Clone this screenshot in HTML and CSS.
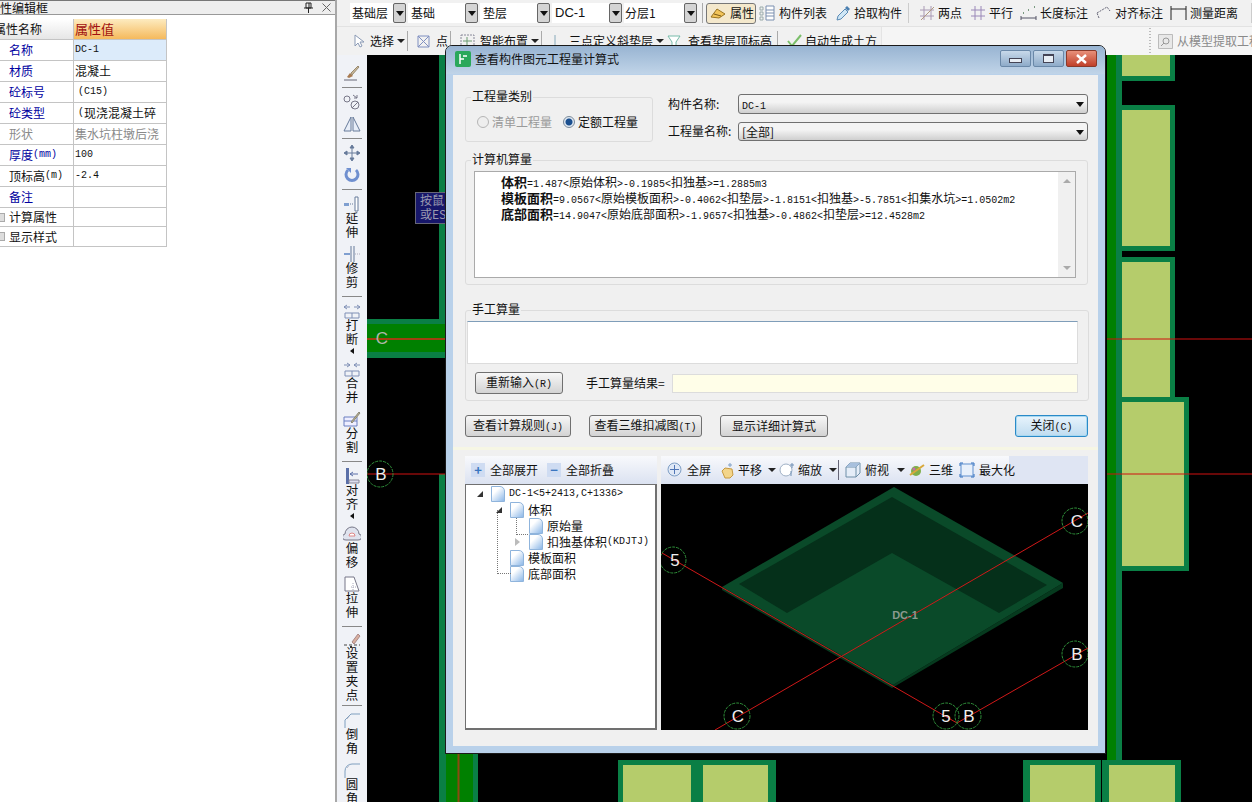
FILE: index.html
```html
<!DOCTYPE html>
<html lang="zh">
<head>
<meta charset="utf-8">
<title>查看构件图元工程量计算式</title>
<link rel="stylesheet" href="styles.css">
</head>
<body>
<div class="app">
  <aside class="props">
    <div class="props-title"><span class="props-name">属性编辑框</span>
      <svg class="pin" width="9" height="11" viewBox="0 0 9 11"><path d="M2 1h5v5H2zM0 6h9M4.5 6v5M5 1v5" fill="none" stroke="#222"/></svg>
      <svg class="x" width="9" height="9" viewBox="0 0 9 9"><path d="M.5.5l8 8M8.5.5l-8 8" stroke="#666"/></svg>
    </div>
    <div class="ptable">
      <div class="pc ph1"><span class="shift">属性名称</span></div><div class="pc ph2">属性值</div>
      <div class="pc blue">名称</div><div class="pc sel"><span class="m">DC-1</span></div>
      <div class="pc blue">材质</div><div class="pc">混凝土</div>
      <div class="pc blue">砼标号</div><div class="pc"><span class="m ind">(C15)</span></div>
      <div class="pc blue">砼类型</div><div class="pc clip"><span class="m ind">(</span>现浇混凝土碎</div>
      <div class="pc grey">形状</div><div class="pc grey clip">集水坑柱墩后浇</div>
      <div class="pc blue">厚度<span class="m">(mm)</span></div><div class="pc"><span class="m">100</span></div>
      <div class="pc">顶标高<span class="m">(m)</span></div><div class="pc"><span class="m">-2.4</span></div>
      <div class="pc blue">备注</div><div class="pc"></div>
      <div class="pc"><i class="plus"></i>计算属性</div><div class="pc"></div>
      <div class="pc"><i class="plus"></i>显示样式</div><div class="pc"></div>
    </div>
  </aside>

  <div class="right">
    <div class="bar1">
      <div class="combo w43">基础层</div><div class="drop"></div>
      <div class="combo w57">基础</div><div class="drop"></div>
      <div class="combo w57">垫层</div><div class="drop"></div>
      <div class="combo w57 sans">DC-1</div><div class="drop"></div>
      <div class="combo w60">分层1</div><div class="drop"></div>
      <i class="vsep s1"></i>
      <div class="tb active">
        <svg width="16" height="14" viewBox="0 0 16 14"><path d="M1 11l6-8 8 5-6 4z" fill="#f2c45a" stroke="#9a7420"/><path d="M4 8l7 2" stroke="#7a5a18"/></svg>属性</div>
      <div class="tb t1"><svg width="16" height="16" viewBox="0 0 16 16"><path d="M1 2h3v3H1zM1 7h3v3H1zM1 12h3v3H1z" fill="none" stroke="#9aa"/><path d="M7 1h8v14H7zM7 5h8M7 8h8M7 11h8" fill="#fff" stroke="#7a8fb0"/></svg>构件列表</div>
      <div class="tb t2"><svg width="16" height="16" viewBox="0 0 16 16"><path d="M2 15l1-4 7-7 3 3-7 7z" fill="#cfe6f5" stroke="#5a8ab5"/><path d="M10 3l2-2 3 3-2 2z" fill="#4a7fb0"/></svg>拾取构件</div>
      <i class="vsep s2"></i>
      <div class="tb t3"><svg width="16" height="16" viewBox="0 0 16 16"><path d="M5 1v14M12 1v14M1 5h14M1 11h14" stroke="#a99ab5" fill="none"/><path d="M2 15L15 2" stroke="#b09a80"/></svg>两点</div>
      <div class="tb t3"><svg width="16" height="16" viewBox="0 0 16 16"><path d="M5 1v14M11 1v14M1 5h14M1 11h14" stroke="#9a88b8" fill="none"/></svg>平行</div>
      <div class="tb t4"><svg width="17" height="16" viewBox="0 0 17 16"><path d="M1 11v4M16 11v4M1 13h15" stroke="#556" fill="none"/><path d="M3 8h1M14 2h1M8 5h1" stroke="#7a9a80" stroke-width="2"/></svg>长度标注</div>
      <div class="tb t4"><svg width="17" height="16" viewBox="0 0 17 16"><path d="M2 8l10-6 3 4M4 13L2 8" stroke="#667" stroke-dasharray="2 1" fill="none"/></svg>对齐标注</div>
      <div class="tb t4"><svg width="17" height="16" viewBox="0 0 17 16"><path d="M1 1v14M16 1v14M1 4h15" stroke="#222" fill="none"/></svg>测量距离</div>
      <i class="vsep s3"></i>
    </div>
    <div class="bar2">
      <div class="tb b1"><svg width="11" height="14" viewBox="0 0 11 14"><path d="M1 1v11l3-3 2 4 2-1-2-4h4z" fill="#fff" stroke="#8a9ab5"/></svg>选择<i class="caret"></i></div>
      <i class="vsep"></i>
      <div class="tb b2"><svg width="13" height="13" viewBox="0 0 13 13"><path d="M1 1h11v11H1zM1 1l11 11M12 1L1 12" fill="none" stroke="#7f8fc0"/></svg>点</div>
      <i class="vsep"></i>
      <div class="tb b3"><svg width="15" height="15" viewBox="0 0 15 15"><path d="M1 1h13v13H1z" fill="none" stroke="#889" stroke-dasharray="2 1"/><path d="M7 3v9M3 7h9" stroke="#6a9a70"/></svg>智能布置<i class="caret"></i></div>
      <i class="vsep"></i>
      <div class="tb b4"><svg width="13" height="15" viewBox="0 0 13 15"><path d="M2 1v13h10" fill="none" stroke="#8ab"/></svg>三点定义斜垫层<i class="caret"></i></div>
      <div class="tb b5"><svg width="14" height="14" viewBox="0 0 14 14"><path d="M1 2h12L9 8v5H5V8z" fill="#fff" stroke="#7ba"/></svg>查看垫层顶标高</div>
      <i class="vsep"></i>
      <div class="tb b6"><svg width="15" height="14" viewBox="0 0 15 14"><path d="M1 7l4 5 9-11" fill="none" stroke="#7bbf6a" stroke-width="2"/></svg>自动生成土方</div>
      <div class="bar2-rest">
        <i class="dots"></i>
        <div class="tb b7"><svg width="15" height="15" viewBox="0 0 15 15"><path d="M.5.5h14v14H.5z" fill="#e8e8e8" stroke="#bbb"/><circle cx="8" cy="7" r="3" fill="none" stroke="#999"/><path d="M6 9l-3 3" stroke="#999"/></svg><span class="dim">从模型提取工程量</span></div>
      </div>
    </div>

    <div class="work">
      <nav class="side">
        <div class="si"><svg width="18" height="18" viewBox="0 0 18 18"><path d="M1 16h13" stroke="#667"/><path d="M4 13l3-4 3 3-4 2z" fill="#a87a50"/><path d="M8 9l7-7 1 1-7 8z" fill="#c8b89a" stroke="#9a8a70"/></svg></div>
        <i class="hsep"></i>
        <div class="si"><svg width="18" height="18" viewBox="0 0 18 18" fill="none" stroke="#778"><circle cx="4" cy="6" r="3"/><circle cx="12" cy="12" r="4"/><path d="M10 2l4 3M14 2v3h-3M9 15l6-6"/></svg></div>
        <div class="si"><svg width="18" height="18" viewBox="0 0 18 18"><path d="M8 2L1 16h7zM10 2l7 14h-7z" fill="#e8eef8" stroke="#667a9a"/></svg></div>
        <i class="hsep"></i>
        <div class="si"><svg width="18" height="18" viewBox="0 0 18 18"><path d="M9 2v14M2 9h14M9 1l-2 3h4zM9 17l-2-3h4zM1 9l3-2v4zM17 9l-3-2v4z" stroke="#667a9a" fill="#667a9a"/></svg></div>
        <div class="si"><svg width="18" height="18" viewBox="0 0 18 18"><path d="M5 4a6 6 0 1 0 8 0" fill="none" stroke="#6f8fcf" stroke-width="3"/><path d="M3 2h5v5z" fill="#6f8fcf"/></svg></div>
        <i class="hsep"></i>
        <div class="tool"><svg width="18" height="18" viewBox="0 0 18 18"><path d="M12 2h3v14h-3z" fill="#fff" stroke="#667a9a"/><path d="M1 8h5v3H1z" fill="#7f9fd0"/><path d="M7 9h4" stroke="#667a9a" stroke-dasharray="1 1"/></svg><span class="vt">延伸</span></div>
        <div class="tool"><svg width="18" height="18" viewBox="0 0 18 18"><path d="M8 1v16M11 1v16" stroke="#667a9a" fill="none"/><path d="M1 9h6" stroke="#7f9fd0" stroke-width="2"/><path d="M12 9h5" stroke="#aab" stroke-dasharray="1 1"/></svg><span class="vt">修剪</span></div>
        <i class="hsep"></i>
        <div class="tool"><svg width="18" height="18" viewBox="0 0 18 18" fill="none" stroke="#7f8fb5"><path d="M2 11h14M2 16h14M2 11v5M16 11v5M9 11v5"/><path d="M7 5H1l3-2M1 5l3 2M11 5h6l-3-2M17 5l-3 2"/></svg><span class="vt">打断</span><i class="larrow"></i></div>
        <div class="tool"><svg width="18" height="18" viewBox="0 0 18 18" fill="none" stroke="#7f8fb5"><path d="M2 11h14M2 16h14M2 11v5M16 11v5M9 11v5"/><path d="M1 5h6l-3-2M7 5l-3 2M17 5h-6l3-2M11 5l3 2"/></svg><span class="vt">合并</span></div>
        <div class="tool"><svg width="18" height="18" viewBox="0 0 18 18"><path d="M1 7h13v9H1z" fill="#eef" stroke="#6a7fc0"/><path d="M1 11h13" stroke="#6a7fc0"/><path d="M8 12L16 2l1 1-8 10z" fill="#c0b090" stroke="#887"/></svg><span class="vt">分割</span></div>
        <i class="hsep"></i>
        <div class="tool"><svg width="18" height="18" viewBox="0 0 18 18"><path d="M3 1v16h3V1z" fill="#5a6fa8"/><path d="M6 13h10v3H6z" fill="#dde" stroke="#889"/><path d="M15 7H7l3-2M7 7l3 2" fill="none" stroke="#5a6fa8"/></svg><span class="vt">对齐</span><i class="larrow"></i></div>
        <div class="tool"><svg width="18" height="18" viewBox="0 0 18 18"><path d="M3 15a3 3 0 0 1-1-6 7 7 0 0 1 14 0 3 3 0 0 1-1 6z" fill="#dfe3ee" stroke="#778"/><path d="M6 11a3 3 0 0 1 6 0z" fill="#fff" stroke="#d88"/></svg><span class="vt">偏移</span></div>
        <div class="tool"><svg width="18" height="18" viewBox="0 0 18 18"><path d="M2 2h9l5 14H2z" fill="#fff" stroke="#778"/><path d="M10 8v8M13 12h-6" stroke="#aab" stroke-dasharray="1 1"/></svg><span class="vt">拉伸</span></div>
        <i class="hsep"></i>
        <div class="tool long"><svg width="18" height="18" viewBox="0 0 18 18"><path d="M1 13h16" stroke="#444" stroke-dasharray="3 2"/><path d="M7 14h2v2H7z" fill="#333"/><path d="M9 10l6-8 2 2-6 8z" fill="#d8b0a0" stroke="#a88"/></svg><span class="vt">设置夹点</span></div>
        <i class="hsep"></i>
        <div class="tool"><svg width="18" height="18" viewBox="0 0 18 18"><path d="M2 17V9l6-6h9" fill="none" stroke="#7f9fbf"/><path d="M4 8l3-3" stroke="#aab" stroke-dasharray="1 1"/></svg><span class="vt">倒角</span></div>
        <div class="tool"><svg width="18" height="18" viewBox="0 0 18 18"><path d="M2 17V10a7 7 0 0 1 7-7h8" fill="none" stroke="#7f9fbf"/><path d="M4 7l3-3" stroke="#aab" stroke-dasharray="1 1"/></svg><span class="vt">圆角</span></div>
      </nav>

      <div class="canvas">
        <svg class="cad" width="885" height="747" viewBox="367 55 885 747">
          <rect x="367" y="55" width="885" height="747" fill="#000"/>
          <rect x="439" y="55" width="6" height="265" fill="#0a7f45"/>
          <rect x="367" y="319" width="78" height="39" fill="#0a7f45"/>
          <rect x="367" y="324" width="78" height="28" fill="#008000"/>
          <rect x="439" y="474" width="6" height="328" fill="#0a7f45"/>
          <rect x="441" y="754" width="37" height="48" fill="#0a7f45"/>
          <rect x="446" y="754" width="27" height="48" fill="#008000"/>
          <path d="M458.500 754V802" stroke="#8a4a10" stroke-width="2"/>
          <rect x="1107" y="55" width="9" height="747" fill="#008000"/>
          <rect x="1116" y="55" width="6" height="747" fill="#0a7f45"/>
          <path class="pad" d="M1122 55h53v26h-53zM1122 105h53v146h-53zM1122 257h53v140h14v174h-67zM618 760h78v42h-78zM696 760h80v42h-80zM1023 760h78v42h-78zM1102 760h79v42h-79z"/>
          <path class="fill" d="M1122 55h48v21h-48zM1122 110h48v136h-48zM1122 262h48v135h-48zM1122 402h62v164h-62zM623 765h68v37h-68zM703 765h65v37h-65zM1030 765h65v37h-65zM1109 765h66v37h-66z"/>
          <path d="M1107 339H1252M367 474H445M1107 474H1252" stroke="#d01010"/>
          <path d="M367 339H445" stroke="#a04010" stroke-width="2"/>
          <circle cx="380" cy="474" r="13" class="ring"/>
          <text x="382" y="344" class="cadl dimm" text-anchor="middle">C</text>
          <text x="381" y="480" class="cadl" text-anchor="middle">B</text>
          <rect x="415.500" y="192.500" width="30" height="31" fill="#17176a" stroke="#667"/>
          <text x="420" y="205" class="tip">按鼠</text>
          <text x="420" y="219" class="tip">或ES</text>
        </svg>
      </div>
    </div>
  </div>

  <section class="dialog">
    <header class="dtitle">
      <svg width="16" height="16" viewBox="0 0 16 16"><rect width="16" height="16" rx="2" fill="#2aa85a"/><path d="M5 3v10M5 8h4M8 5h4" stroke="#fff" stroke-width="1.500" fill="none"/></svg>
      <span class="dname">查看构件图元工程量计算式</span>
      <div class="wbtn"><i class="g-min"></i></div>
      <div class="wbtn"><i class="g-max"></i></div>
      <div class="wbtn close"><svg width="13" height="10" viewBox="0 0 13 10"><path d="M2 1l9 8M11 1l-9 8" stroke="#fff" stroke-width="2.500"/></svg></div>
    </header>
    <div class="client">
      <div class="toprow">
        <fieldset class="grp g1">
          <span class="legend">工程量类别</span>
          <label class="radio off"><i class="rdo"></i>清单工程量</label>
          <label class="radio"><i class="rdo on"></i>定额工程量</label>
        </fieldset>
        <div class="fields">
          <div class="field"><span class="flabel">构件名称:</span><div class="select"><span class="m">DC-1</span></div></div>
          <div class="field"><span class="flabel">工程量名称:</span><div class="select">[全部]</div></div>
        </div>
      </div>
      <div class="grp g2">
        <span class="legend">计算机算量</span>
        <div class="output">
          <div class="lines">
            <p><b>体积</b><span class="m">=1.487&lt;</span>原始体积<span class="m">&gt;-0.1985&lt;</span>扣独基<span class="m">&gt;=1.2885m3</span></p>
            <p><b>模板面积</b><span class="m">=9.0567&lt;</span>原始模板面积<span class="m">&gt;-0.4062&lt;</span>扣垫层<span class="m">&gt;-1.8151&lt;</span>扣独基<span class="m">&gt;-5.7851&lt;</span>扣集水坑<span class="m">&gt;=1.0502m2</span></p>
            <p><b>底部面积</b><span class="m">=14.9047&lt;</span>原始底部面积<span class="m">&gt;-1.9657&lt;</span>扣独基<span class="m">&gt;-0.4862&lt;</span>扣垫层<span class="m">&gt;=12.4528m2</span></p>
          </div>
          <div class="vscroll"><i class="up"></i><i class="down"></i></div>
        </div>
      </div>
      <div class="grp g3">
        <span class="legend">手工算量</span>
        <div class="input"></div>
        <div class="manual">
          <button class="btn b-re">重新输入<span class="m">(R)</span></button>
          <span class="mlabel">手工算量结果=</span>
          <div class="result"></div>
        </div>
      </div>
      <div class="actions">
        <button class="btn a1">查看计算规则<span class="m">(J)</span></button>
        <button class="btn a2">查看三维扣减图<span class="m">(T)</span></button>
        <button class="btn a3">显示详细计算式</button>
        <button class="btn a4">关闭<span class="m">(C)</span></button>
      </div>
      <div class="strip"></div>
      <div class="lower">
        <div class="lcol">
          <div class="subbar">
            <div class="sb"><i class="pm">+</i>全部展开</div>
            <div class="sb"><i class="pm">−</i>全部折叠</div>
          </div>
          <div class="tree">
            <div class="tr d0"><i class="tw open"></i><i class="doc"></i><span class="m">DC-1&lt;5+2413,C+1336&gt;</span></div>
            <div class="tr d1"><i class="tw open"></i><i class="doc"></i>体积</div>
            <div class="tr d2"><i class="doc"></i>原始量</div>
            <div class="tr d2"><i class="tw shut"></i><i class="doc"></i>扣独基体积<span class="m">(KDJTJ)</span></div>
            <div class="tr d1"><i class="doc"></i>模板面积</div>
            <div class="tr d1"><i class="doc"></i>底部面积</div>
            <i class="vline v1"></i><i class="vline v2"></i>
          </div>
        </div>
        <div class="rcol">
          <div class="subbar vbar">
            <div class="vb w1"><svg width="16" height="16" viewBox="0 0 16 16"><circle cx="7.500" cy="7.500" r="6.500" fill="#dfe8f6" stroke="#7f9fc5"/><path d="M7.500 3v9M3 7.500h9" stroke="#4f75b5"/></svg>全屏</div>
            <div class="vb w2"><svg width="17" height="17" viewBox="0 0 17 17"><path d="M3 9l3-3 7 1 1 6-3 3H6z" fill="#f3d58a" stroke="#c79a40"/><path d="M11 1v4M9 3h4" stroke="#7f9fc5"/></svg>平移<i class="caret"></i></div>
            <div class="vb w3"><svg width="16" height="16" viewBox="0 0 16 16"><circle cx="7" cy="8" r="6" fill="#fff" stroke="#9fb0c5"/><path d="M13 1v5M11 3h4M12 9v5" stroke="#6f8fb5"/></svg>缩放<i class="caret"></i></div>
            <i class="vsep dark"></i>
            <div class="vb w4"><svg width="16" height="16" viewBox="0 0 16 16"><path d="M1 5h10v10H1zM1 5l4-4h10v10l-4 4M11 5l4-4" fill="#e5edf8" stroke="#6f8fa8"/><path d="M5 1h10l-4 4H1z" fill="#a8c0dd"/></svg>俯视<i class="caret"></i></div>
            <div class="vb w5"><svg width="16" height="16" viewBox="0 0 16 16"><circle cx="7" cy="9" r="5" fill="#7fae4a"/><path d="M1 13L15 3" stroke="#d9a83a" stroke-width="2"/><circle cx="5" cy="7" r="1.500" fill="#c86ab0"/></svg>三维</div>
            <div class="vb w6"><svg width="16" height="16" viewBox="0 0 16 16"><path d="M2 2h12v12H2z" fill="#e8f0fb" stroke="#5f8fcf"/><path d="M1 4V1h3M12 1h3v3M15 12v3h-3M4 15H1v-3" fill="none" stroke="#2f6fbf"/></svg>最大化</div>
          </div>
          <div class="view">
            <svg width="427" height="246" viewBox="661 484 427 246">
              <rect x="661" y="484" width="427" height="246" fill="#000"/>
              <path d="M722 587L893 685 1063 583V588L892 688 722 590z" fill="#063a1e"/>
              <path d="M722 587L894 487 1063 583 893 685z" fill="#0a4a29"/>
              <path d="M739 584L892 497 1047 585 999 613 892 553 787 613z" fill="#05301a"/>
              <path d="M662 553L957 723M715 730L1088 513M957 723L1088 648" stroke="#d01818" fill="none"/>
              <g class="ring">
                <circle cx="673" cy="560" r="13"/>
                <circle cx="1075" cy="521" r="13"/>
                <circle cx="1075" cy="654" r="13"/>
                <circle cx="737" cy="716" r="13"/>
                <circle cx="946" cy="716" r="13"/>
                <circle cx="968" cy="716" r="13"/>
              </g>
              <text x="675" y="566" class="cadl" text-anchor="middle">5</text>
              <text x="1077" y="527" class="cadl" text-anchor="middle">C</text>
              <text x="1077" y="660" class="cadl" text-anchor="middle">B</text>
              <text x="738" y="722" class="cadl" text-anchor="middle">C</text>
              <text x="946" y="722" class="cadl" text-anchor="middle">5</text>
              <text x="969" y="722" class="cadl" text-anchor="middle">B</text>
              <text x="905" y="619" class="dc" text-anchor="middle">DC-1</text>
            </svg>
          </div>
        </div>
      </div>
    </div>
  </section>
</div>
</body>
</html>
```
FILE: styles.css
```css
* { box-sizing: border-box; }
html, body { margin: 0; height: 100%; }
body { font: 12px/14px "Noto Sans CJK SC", "Liberation Sans", sans-serif; color: #111; background: #f0f0f0; overflow: hidden; }
i { display: block; font-style: normal; }
p { margin: 0; }
.m { font: 10px/14px "Liberation Mono", "Noto Sans CJK SC", monospace; }
.app { position: relative; display: flex; width: 1252px; height: 802px; overflow: hidden; }

/* property panel */
.props { width: 337px; flex: none; background: #fff; border-right: 2px solid #a8a8a8; overflow: hidden; }
.props-title { display: flex; align-items: center; height: 15px; background: #eee; border-top: 1px solid #777; border-bottom: 1px solid #999; overflow: hidden; }
.props-name { margin-left: -12px; font-size: 12px; flex: 1; }
.pin { margin-right: 9px; }
.x { margin-right: 4px; }
.ptable { display: grid; grid-template-columns: 73px 94px; grid-template-rows: repeat(9, 21px) 19px 20px; margin-top: 4px; }
.pc { display: flex; align-items: center; padding-left: 9px; border-bottom: 1px solid #c4c4c4; overflow: hidden; white-space: nowrap; }
.pc:nth-child(even) { padding-left: 1px; border-left: 1px solid #c4c4c4; border-right: 1px solid #c4c4c4; }
.ph1 { background: linear-gradient(#fff, #e6e6e6); padding-left: 0; }
.shift { margin-left: -6px; }
.ph2 { background: linear-gradient(#fdebc0, #f5b95c); color: #a01010; font-size: 13px; }
.sel { background: #dcebfa; }
.blue { color: #0000a0; }
.grey { color: #8a8a8a; }
.ind { margin-left: 3px; }
.clip { overflow: hidden; }
.plus { width: 5px; height: 9px; margin-left: -9px; margin-right: 4px; background: #ddd; border: 1px solid #aaa; border-left: 0; }

/* top toolbars */
.right { flex: 1; min-width: 0; display: flex; flex-direction: column; }
.bar1, .bar2 { display: flex; align-items: center; flex: none; white-space: nowrap; overflow: hidden; }
.bar1 { height: 27px; padding-left: 13px; background: #f1f1f1; border-bottom: 1px solid #e2e2e2; }
.bar2 { height: 28px; padding-left: 17px; background: #f1f1f1; }
.combo { height: 20px; padding: 3px 2px; background: #fff; flex: none; }
.w43 { width: 43px; }
.w57 { width: 57px; padding-left: 3px; }
.w60 { width: 60px; padding-left: 1px; }
.sans { font-family: "Liberation Sans", sans-serif; font-size: 13px; }
.drop { position: relative; flex: none; width: 13px; height: 20px; margin-right: 2px; background: #d4d4d4; border: 1px solid #666; border-radius: 2px; }
.drop::after { content: ""; position: absolute; left: 2px; top: 7px; border: 4px solid transparent; border-top: 5px solid #111; border-bottom: 0; }
.vsep { width: 1px; height: 20px; background: #aaa; flex: none; }
.s1 { margin: 0 3px 0 3px; }
.s2 { margin: 0 10px 0 6px; background: #ccc; }
.s3 { margin-left: 6px; background: #ccc; }
.tb { display: flex; align-items: center; flex: none; }
.tb svg { margin-right: 4px; flex: none; }
.active { width: 50px; height: 21px; padding-left: 3px; margin-right: 3px; background: #f4e8cc; border: 1px solid #777; border-radius: 3px; }
.t1 { margin-right: 8px; }
.t2 { margin-right: 0; }
.t2 svg { margin-right: 3px; }
.t3 { margin-right: 8px; }
.t3 svg { margin-right: 3px; }
.t3 + .t4 { margin-left: -1px; }
.t4 { margin-right: 7px; }
.t4 svg { margin-right: 3px; }
.b1 svg { margin-right: 5px; }
.caret { width: 0; height: 0; margin-left: 3px; border: 4px solid transparent; border-top: 4px solid #222; border-bottom: 0; }
.bar2 .vsep { margin: 0 9px 0 2px; height: 20px; }
.b1 { margin-right: 0; }
.b2 { margin-right: 0; }
.b2 svg { margin-right: 6px; }
.b3 svg { margin-right: 5px; }
.b4 { margin-left: 2px; }
.b4 svg { margin-right: 3px; }
.b5 { margin-left: 3px; margin-right: 3px; }
.b5 svg { margin-right: 7px; }
.b6 svg { margin-right: 3px; }
.bar2-rest { display: flex; align-items: center; height: 100%; flex: 1; margin-left: 4px; padding-left: 267px; background: #f5f5f5; border-left: 1px solid #e4e4e4; }
.dots { width: 2px; height: 26px; margin-right: 7px; background: repeating-linear-gradient(#bbb 0 1px, transparent 1px 3px); }
.dim { color: #8a8a8a; }

/* work area */
.work { display: flex; flex: 1; min-height: 0; }
.side { width: 30px; flex: none; display: flex; flex-direction: column; align-items: center; gap: 4px; padding-top: 9px; background: #f0f2f7; overflow: hidden; }
.si { height: 18px; flex: none; }
.si svg, .tool svg { display: block; }
.hsep { width: 20px; height: 1px; flex: none; margin: 1px 0; background: #888; }
.tool { display: flex; flex-direction: column; align-items: center; flex: none; margin-bottom: 2px; }
.long { margin-bottom: -2px; }
.vt { width: 13px; margin-top: -2px; font-size: 12.500px; line-height: 14px; text-align: center; word-break: break-all; color: #111; }
.long .vt { margin-top: -4px; }
.larrow { margin-top: 2px; border: 3px solid transparent; border-right: 4px solid #111; border-left: 0; }
.canvas { flex: 1; min-width: 0; background: #000; }
.cad { display: block; }
.pad { fill: #0a7f45; }
.fill { fill: #b5cc6b; }
.ring { fill: none; stroke: #2f8f3a; stroke-dasharray: 3 1; }
.cadl { font: 17px "Liberation Sans", sans-serif; fill: #eee; }
.dimm { fill: #b0b8a8; }
.tip { font: 12px "Noto Sans CJK SC", sans-serif; fill: #9a9ab0; }
.dc { font: bold 11px "Liberation Sans", sans-serif; fill: #8a9a90; }

/* dialog */
.dialog { position: absolute; left: 445px; top: 45px; width: 661px; height: 709px; display: flex; flex-direction: column; padding: 0 7px 7px; background: #b9d1ea; border: 1px solid #1a1a1a; border-radius: 7px 7px 0 0; }
.dtitle { display: flex; align-items: center; flex: none; height: 28px; margin: 0 -7px; padding: 0 8px 3px 9px; border-radius: 6px 6px 0 0; background: linear-gradient(#98b4d2, #c0d4e8); }
.dname { flex: 1; margin-left: 4px; color: #111; }
.wbtn { display: flex; align-items: center; justify-content: center; width: 31px; height: 17px; margin-left: 2px; background: linear-gradient(#c8d9ea, #8eabc9); border: 1px solid #6a88a8; border-radius: 2px; }
.close { background: linear-gradient(#e8907a, #c0402a); border-color: #8a3a2a; }
.g-min { width: 13px; height: 5px; margin-top: 3px; background: #e8eef5; border: 1px solid #445; }
.g-max { width: 11px; height: 9px; border: 1px solid #445; border-top-width: 2px; background: #e8eef5; }
.client { flex: 1; min-height: 0; margin-top: 1px; padding: 22px 10px 0 12px; background: #f0f0f0; }
.toprow { display: flex; height: 45px; }
.grp { position: relative; margin: 0; padding: 0; border: 1px solid #dcdcdc; border-radius: 3px; }
.legend { position: absolute; top: -10px; left: 5px; padding: 0 1px; background: #f0f0f0; line-height: 16px; }
.g1 { display: flex; align-items: center; width: 188px; height: 45px; padding: 4px 0 0 11px; gap: 11px; flex: none; }
.radio { display: flex; align-items: center; gap: 3px; font-size: 12px; }
.off { color: #9a9a9a; }
.rdo { width: 12px; height: 12px; border-radius: 50%; border: 1px solid #b5b5b5; background: #eee; }
.rdo.on { background: radial-gradient(circle, #1a4f8f 0 3px, #dfe8f2 4px); border-color: #7a8a9a; }
.fields { flex: 1; margin: -3px 0 0 15px; display: flex; flex-direction: column; gap: 8px; }
.field { display: flex; align-items: center; height: 19.500px; }
.flabel { width: 70px; flex: none; white-space: nowrap; }
.select { position: relative; flex: 1; height: 100%; padding: 2px 3px; background: linear-gradient(#f4f4f4 40%, #cfcfcf); border: 1px solid #707070; border-radius: 3px; }
.select::after { content: ""; position: absolute; right: 3px; top: 7px; border: 4px solid transparent; border-top: 5px solid #111; border-bottom: 0; }
.g2 { height: 125px; margin-top: 18px; padding: 10px 11px 0 8px; }
.output { display: flex; height: 107px; background: #fff; border: 1px solid #aaa; }
.lines { flex: 1; padding: 2px 0 0 26px; white-space: nowrap; overflow: hidden; }
.lines p { height: 16px; line-height: 16px; }
.lines .m { line-height: 14px; }
.lines b { font-weight: 700; font-size: 13px; }
.vscroll { display: flex; flex-direction: column; justify-content: space-between; align-items: center; width: 17px; padding: 7px 0; background: #f0f0f0; }
.up { border: 4px solid transparent; border-bottom: 4px solid #aaa; border-top: 0; }
.down { border: 4px solid transparent; border-top: 4px solid #aaa; border-bottom: 0; }
.g3 { width: 624px; height: 91px; margin-top: 25px; padding: 10px 10px 0 1px; }
.input { height: 43px; background: #fff; border: 1px solid #dcdcdc; border-top-color: #7f9db9; }
.manual { display: flex; align-items: center; height: 22px; margin-top: 8px; padding-left: 8px; }
.btn { font: 12px/14px "Noto Sans CJK SC", sans-serif; color: #111; padding: 0; height: 22px; background: linear-gradient(#f7f7f7, #d3d3d3); border: 1px solid #707070; border-radius: 3px; flex: none; }
.b-re { width: 88px; }
.mlabel { margin: 0 7px 0 23px; white-space: nowrap; }
.result { width: 406px; height: 19px; background: #fffee8; border: 1px solid #dcdcdc; }
.actions { display: flex; margin-top: 14px; }
.a1 { width: 106px; }
.a2 { width: 113px; margin-left: 18px; }
.a3 { width: 108px; margin-left: 18px; }
.a4 { width: 73px; margin-left: auto; background: linear-gradient(#e8f4fc, #bfdcf0); border-color: #2a8ac8; box-shadow: inset 0 0 0 1px #a8d8f0; }
.strip { height: 3px; margin: 10px -10px 0 -12px; background: #f6f6e4; }
.lower { display: flex; gap: 4px; margin-top: 6px; }
.lcol { width: 192px; flex: none; }
.rcol { width: 427px; flex: none; }
.subbar { display: flex; align-items: center; height: 28px; padding-left: 6px; gap: 9px; background: linear-gradient(#f8f9fc, #dbe2f1); white-space: nowrap; }
.sb { display: flex; align-items: center; gap: 5px; }
.pm { width: 14px; height: 14px; text-align: center; line-height: 13px; font-weight: 700; font-size: 13px; color: #3a75c0; background: #cfdcf2; }
.tree { position: relative; height: 246px; padding-top: 1px; background: #fff; border: 1px solid #707070; border-right-width: 2px; border-bottom-width: 2px; }
.tr { display: flex; align-items: center; height: 16px; white-space: nowrap; }
.d0 { padding-left: 25px; }
.d1 { padding-left: 44px; }
.d2 { padding-left: 63px; }
.tw { width: 0; height: 0; margin-left: -14px; margin-right: 8px; }
.open { border-style: solid; border-width: 0 0 6px 6px; border-color: transparent transparent #333 transparent; }
.shut { border-style: solid; border-width: 4px 0 4px 5px; border-color: transparent transparent transparent #bbb; margin-right: 9px; }
.doc { width: 14px; height: 16px; margin-right: 4px; flex: none; background: linear-gradient(135deg, #fff 30%, #8db8e8); border: 1px solid #8fb4dc; border-top-right-radius: 5px; }
.vline { position: absolute; border-left: 1px dotted #777; }
.v1 { left: 31px; top: 25px; height: 64px; border-bottom: 1px dotted #777; width: 14px; }
.v2 { left: 50px; top: 33px; height: 17px; border-bottom: 1px dotted #777; width: 12px; }
.vbar { gap: 0; background: linear-gradient(90deg, transparent 348px, #dfe5f3 348px), linear-gradient(#f8f9fc, #dbe2f1); }
.vb { display: flex; align-items: center; gap: 4px; flex: none; }
.vsep.dark { height: 20px; margin: 0 6px 0 1px; background: #667; }
.w1 { margin-right: 8px; }
.w2 { margin-right: 3px; gap: 2px; }
.w2 .caret, .w3 .caret, .w4 .caret { margin-left: 4px; }
.w3 { gap: 3px; }
.w4 { margin-right: 4px; }
.w5 { margin-right: 6px; }
.view { height: 246px; border-bottom: 1px solid #888; }
.view svg { display: block; }
```
